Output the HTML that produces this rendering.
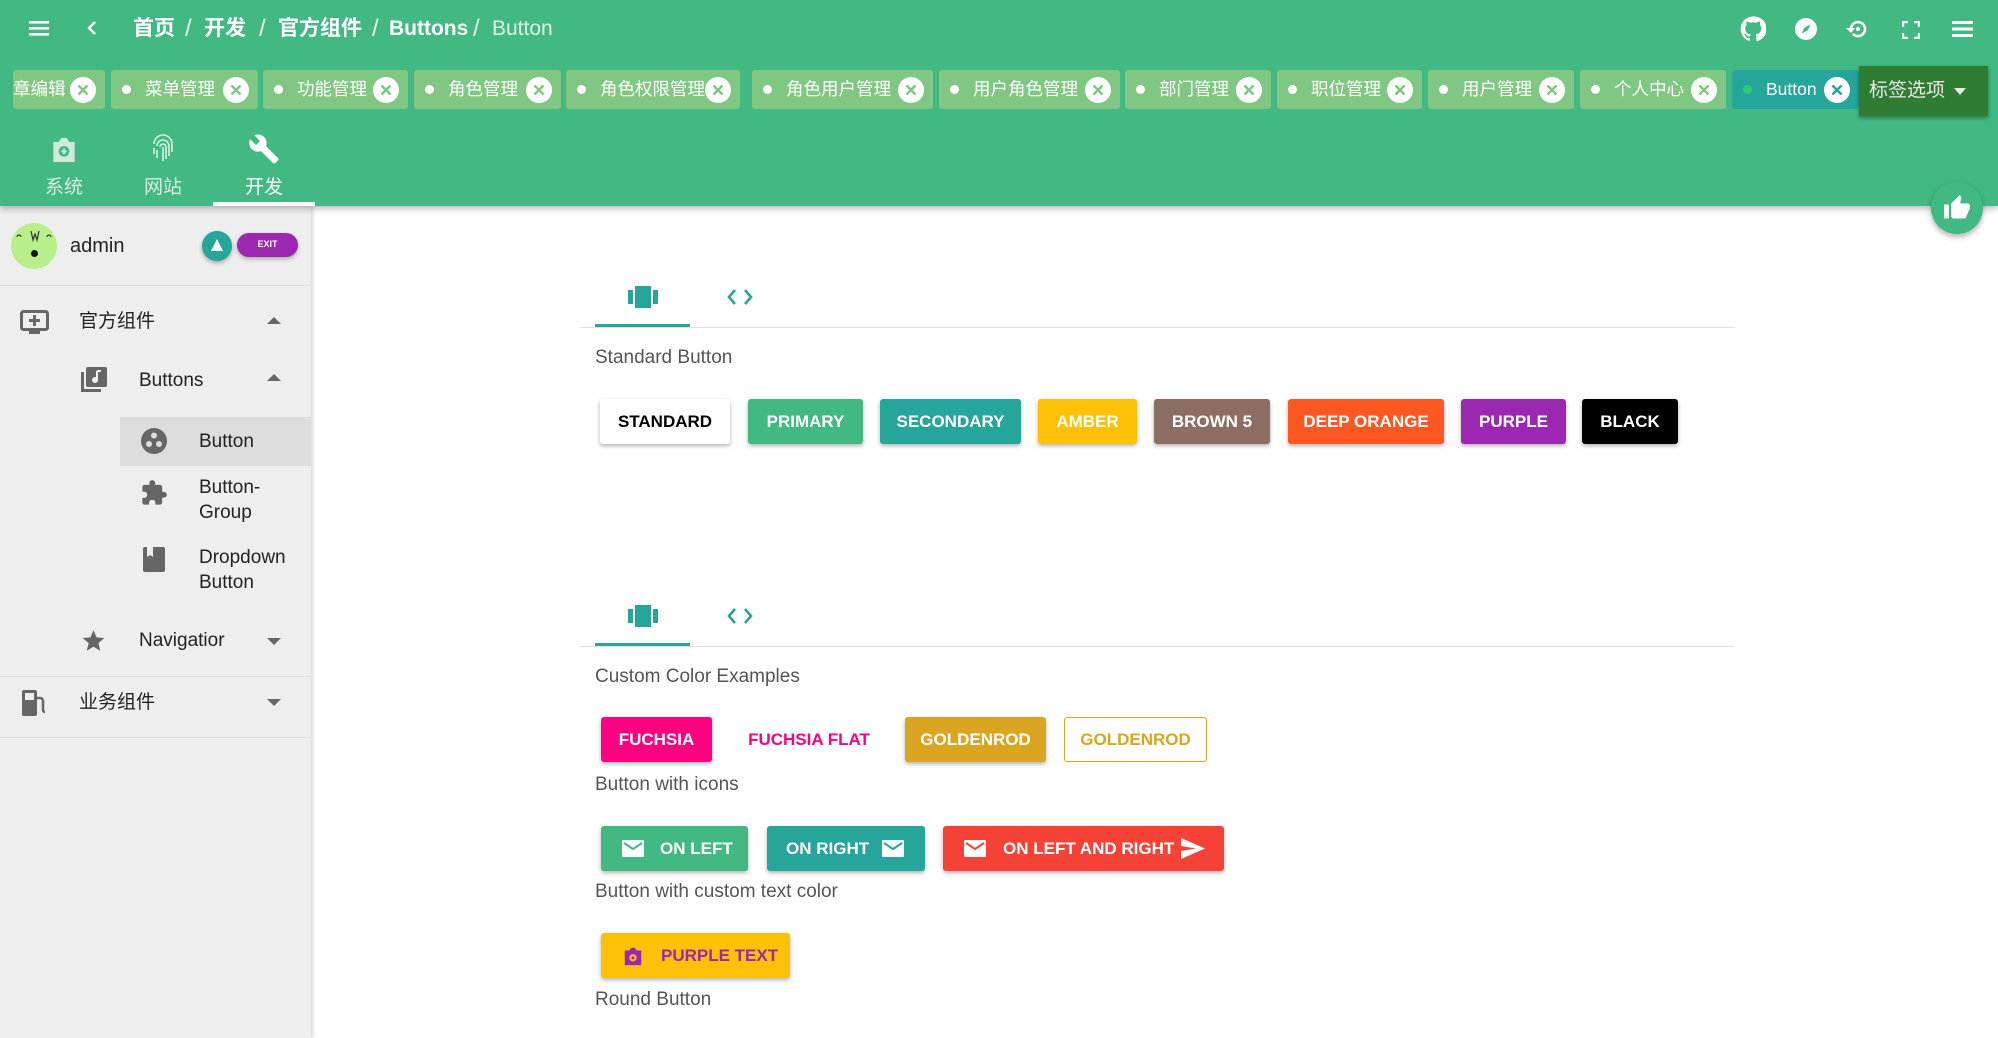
<!DOCTYPE html>
<html><head><meta charset="utf-8"><style>
*{box-sizing:border-box;margin:0;padding:0}
body{width:1998px;height:1038px;overflow:hidden;background:#fff;font-family:"Liberation Sans","Noto Sans CJK SC",sans-serif;position:relative}
.hdr{position:absolute;left:0;top:0;width:1998px;height:206px;background:#42b883;box-shadow:0 3px 6px rgba(0,0,0,.25);z-index:2}
.abs{position:absolute}
.bc{position:absolute;top:14px;height:30px;line-height:30px;font-size:21px;color:#fff;font-weight:bold;white-space:nowrap}
.sl{font-weight:normal;color:#e8f5ee;font-size:24px}
.tag{position:absolute;top:70px;height:39px;background:#81c784;border-radius:3px;overflow:hidden;color:#fff;font-size:17.5px;line-height:39px;white-space:nowrap}
.tag .d{position:absolute;left:11px;top:15px;width:9px;height:9px;border-radius:50%;background:#fff}
.tag .t{position:absolute;left:34px;top:0}
.tag .x{position:absolute;right:9px;top:7px;width:26px;height:26px}
.side{position:absolute;left:0;top:206px;width:311px;height:832px;background:#eee;box-shadow:2px 0 4px rgba(0,0,0,.15);z-index:1}
.mi{position:absolute;font-size:19px;color:#222;line-height:25px}
.hr{position:absolute;left:0;width:311px;height:1px;background:#ddd}
.arr{position:absolute;width:0;height:0;border-left:7px solid transparent;border-right:7px solid transparent}
.up{border-bottom:7px solid #666}.dn{border-top:7px solid #666}
.lbl{position:absolute;left:595px;font-size:19px;color:#555;font-weight:300}
.btn{position:absolute;height:45px;line-height:45px;text-align:center;font-size:17px;font-weight:bold;color:#fff;border-radius:3px;box-shadow:0 2px 4px rgba(0,0,0,.3);white-space:nowrap}
.tabline{position:absolute;left:580px;width:1155px;height:1px;background:#e0e0e0}
.tabul{position:absolute;left:595px;width:95px;height:3px;background:#26a69a}
</style></head><body>
<svg width="0" height="0" style="position:absolute"><defs><symbol id="cx" viewBox="0 0 26 26"><circle cx="13" cy="13" r="13" fill="#fff"/><path d="M8.5 8.5l9 9M17.5 8.5l-9 9" stroke="currentColor" stroke-width="2.6"/></symbol></defs></svg>
<div class="hdr">
 <svg class="abs" style="left:29px;top:20px" width="20" height="16"><rect y="1" width="20" height="2.6" fill="#fff"/><rect y="7" width="20" height="2.6" fill="#fff"/><rect y="13" width="20" height="2.6" fill="#fff"/></svg>
 <svg class="abs" style="left:86px;top:20px" width="12" height="16"><path d="M9 2 L3 8 L9 14" stroke="#fff" stroke-width="2.4" fill="none"/></svg>
 <div class="bc" style="left:133px">首页</div><div class="bc sl" style="left:185px">/</div>
 <div class="bc" style="left:204px">开发</div><div class="bc sl" style="left:259px">/</div>
 <div class="bc" style="left:278px">官方组件</div><div class="bc sl" style="left:372px">/</div>
 <div class="bc" style="left:389px">Buttons</div><div class="bc sl" style="left:473px">/</div>
 <div class="bc" style="left:492px;font-weight:normal;color:#e0f2e8">Button</div>
 <svg class="abs" style="left:1740px;top:16px" width="26" height="26" viewBox="0 0 24 24"><path fill="#fff" d="M12 .5a11.5 11.5 0 0 0-3.6 22.4c.6.1.8-.3.8-.6v-2c-3.2.7-3.900-1.5-3.9-1.5-.5-1.3-1.3-1.7-1.3-1.7-1-.7.1-.7.1-.7 1.2.1 1.8 1.2 1.8 1.2 1 1.8 2.8 1.3 3.5 1 .1-.8.4-1.300.7-1.6-2.6-.3-5.3-1.3-5.3-5.7 0-1.3.5-2.3 1.2-3.1-.1-.3-.5-1.5.1-3.1 0 0 1-.3 3.2 1.2a11 11 0 0 1 5.8 0c2.2-1.5 3.2-1.2 3.2-1.2.6 1.6.2 2.8.1 3.1.7.8 1.2 1.8 1.2 3.1 0 4.4-2.7 5.4-5.3 5.7.4.4.8 1.1.8 2.2v3.3c0 .3.2.7.8.6A11.5 11.5 0 0 0 12 .5z"/></svg>
 <svg class="abs" style="left:1794px;top:17px" width="24" height="24" viewBox="0 0 24 24"><circle cx="12" cy="12" r="11" fill="#fff"/><path d="M16.5 7.5 L13.5 13.5 L7.5 16.5 L10.5 10.5Z" fill="#42b883"/></svg>
 <svg class="abs" style="left:1844px;top:17px" width="26" height="24" viewBox="0 0 26 24"><path d="M7 12a7 7 0 1 1 2 5" stroke="#fff" stroke-width="2.6" fill="none"/><path d="M2 11 L7 16 L11 11Z" fill="#fff"/><circle cx="14" cy="12" r="2" fill="#fff"/></svg>
 <svg class="abs" style="left:1902px;top:21px" width="18" height="18"><path d="M1 6V1h5M12 1h5v5M17 12v5h-5M6 17H1v-5" stroke="#fff" stroke-width="2.4" fill="none"/></svg>
 <svg class="abs" style="left:1952px;top:21px" width="21" height="16"><rect y="0" width="21" height="3" fill="#fff"/><rect y="6.5" width="21" height="3" fill="#fff"/><rect y="13" width="21" height="3" fill="#fff"/></svg>
 <div class="tag" style="left:13px;width:92px;color:#81c784"><span class="t" style="left:0;color:#fff">章编辑</span><svg class="x"><use href="#cx"/></svg></div>
 <div class="tag" style="left:111px;width:147px;color:#81c784"><span class="d"></span><span class="t" style="color:#fff">菜单管理</span><svg class="x"><use href="#cx"/></svg></div>
 <div class="tag" style="left:263px;width:145px;color:#81c784"><span class="d"></span><span class="t" style="color:#fff">功能管理</span><svg class="x"><use href="#cx"/></svg></div>
 <div class="tag" style="left:414px;width:147px;color:#81c784"><span class="d"></span><span class="t" style="color:#fff">角色管理</span><svg class="x"><use href="#cx"/></svg></div>
 <div class="tag" style="left:566px;width:174px;color:#81c784"><span class="d"></span><span class="t" style="color:#fff">角色权限管理</span><svg class="x"><use href="#cx"/></svg></div>
 <div class="tag" style="left:752px;width:181px;color:#81c784"><span class="d"></span><span class="t" style="color:#fff">角色用户管理</span><svg class="x"><use href="#cx"/></svg></div>
 <div class="tag" style="left:939px;width:181px;color:#81c784"><span class="d"></span><span class="t" style="color:#fff">用户角色管理</span><svg class="x"><use href="#cx"/></svg></div>
 <div class="tag" style="left:1125px;width:146px;color:#81c784"><span class="d"></span><span class="t" style="color:#fff">部门管理</span><svg class="x"><use href="#cx"/></svg></div>
 <div class="tag" style="left:1277px;width:145px;color:#81c784"><span class="d"></span><span class="t" style="color:#fff">职位管理</span><svg class="x"><use href="#cx"/></svg></div>
 <div class="tag" style="left:1428px;width:146px;color:#81c784"><span class="d"></span><span class="t" style="color:#fff">用户管理</span><svg class="x"><use href="#cx"/></svg></div>
 <div class="tag" style="left:1580px;width:146px;color:#81c784"><span class="d"></span><span class="t" style="color:#fff">个人中心</span><svg class="x"><use href="#cx"/></svg></div>
 <div class="tag" style="left:1732px;width:127px;background:#26a69a;color:#26a69a"><span class="d" style="background:#2ecc71"></span><span class="t" style="color:#fff">Button</span><svg class="x"><use href="#cx"/></svg></div>
 <div class="abs" style="left:1859px;top:66px;width:129px;height:50px;background:#2e7d32;box-shadow:0 2px 4px rgba(0,0,0,.35);color:#e8e8e8;font-size:19px;line-height:50px;padding-left:10px">标签选项 <svg width="12" height="8" style="margin-left:4px"><path d="M0 0h12L6 7z" fill="#e8e8e8"/></svg></div>
 <svg class="abs" style="left:48px;top:134px" width="32" height="32" viewBox="0 0 24 24"><path d="M4 6h4l2-3h4l2 3h4v15H4z" fill="#cfeadb"/><circle cx="12" cy="13" r="4" fill="#42b883"/><path d="M12 11v4M10 13h4" stroke="#cfeadb" stroke-width="1.5"/></svg>
 <div class="abs" style="left:45px;top:172px;font-size:19px;color:#d7efe2">系统</div>
 <svg class="abs" style="left:150px;top:134px" width="26" height="30" viewBox="0 0 26 30" fill="none" stroke="#d7efe2" stroke-width="1.6"><path d="M4 10a9 9 0 0 1 18 0v8"/><path d="M7 12a6 6 0 0 1 12 0v10"/><path d="M10 13a3 3 0 0 1 6 0v12"/><path d="M13 13v14M4 14v6M7 16v8"/></svg>
 <div class="abs" style="left:144px;top:172px;font-size:19px;color:#d7efe2">网站</div>
 <svg class="abs" style="left:248px;top:133px" width="32" height="32" viewBox="0 0 24 24"><path fill="#fff" d="M22.7 19l-9.1-9.1c.9-2.3.4-5-1.5-6.9-2-2-5-2.4-7.4-1.3L9 6 6 9 1.6 4.7C.4 7.1.9 10.1 2.9 12.1c1.9 1.9 4.6 2.4 6.9 1.5l9.1 9.1c.4.4 1 .4 1.4 0l2.3-2.3c.5-.4.5-1.1.1-1.4z"/></svg>
 <div class="abs" style="left:245px;top:172px;font-size:19px;color:#fff">开发</div>
 <div class="abs" style="left:213px;top:202px;width:102px;height:4px;background:#fff"></div>
</div>
<div class="abs" style="left:1931px;top:182px;width:52px;height:52px;border-radius:50%;background:#42b883;box-shadow:0 3px 6px rgba(0,0,0,.3);z-index:3"><svg style="margin:12px" width="28" height="28" viewBox="0 0 24 24"><path fill="#fff" d="M1 21h4V9H1v12zm22-11c0-1.1-.9-2-2-2h-6.3l1-4.6v-.3c0-.4-.2-.8-.4-1.1L14.2 1 7.6 7.6C7.2 7.9 7 8.4 7 9v10c0 1.1.9 2 2 2h9c.8 0 1.5-.5 1.8-1.2l3-7.1c.1-.2.2-.5.2-.7v-2z"/></svg></div>
<div class="side">
 <div class="abs" style="left:11px;top:17px;width:46px;height:46px;border-radius:50%;background:#b9ef8a"><div class="abs" style="left:20px;top:27px;width:7px;height:7px;border-radius:50%;background:#111"></div><svg class="abs" style="left:4px;top:6px" width="38" height="14"><path d="M2 8a2 2 0 0 1 4 0M32 8a2 2 0 0 1 4 0M16 2l2 9 2-6 2 6 2-9" stroke="#333" stroke-width="1.2" fill="none"/></svg></div>
 <div class="mi" style="left:70px;top:28px;font-size:20px">admin</div>
 <div class="abs" style="left:202px;top:25px;width:30px;height:30px;border-radius:50%;background:#26a69a;box-shadow:0 2px 4px rgba(0,0,0,.3)"><div class="abs" style="left:9px;top:8px;border-left:6px solid transparent;border-right:6px solid transparent;border-bottom:12px solid #fff"></div></div>
 <div class="abs" style="left:237px;top:27px;width:61px;height:24px;border-radius:12px;background:#9c27b0;color:#fff;font-size:9px;font-weight:bold;text-align:center;line-height:22px;box-shadow:0 2px 4px rgba(0,0,0,.3)">EXIT</div>
 <div class="hr" style="top:79px"></div>
 <svg class="abs" style="left:20px;top:104px" width="29" height="25" viewBox="0 0 29 25"><rect x="1.5" y="1.5" width="26" height="18" rx="2" fill="none" stroke="#666" stroke-width="3"/><rect x="9" y="21" width="11" height="3" fill="#666"/><path d="M14.5 5v11M9 10.5h11" stroke="#666" stroke-width="3"/></svg>
 <div class="mi" style="left:79px;top:103px">官方组件</div><div class="arr up" style="left:267px;top:111px"></div>
 <svg class="abs" style="left:81px;top:161px" width="26" height="25" viewBox="0 0 26 25"><rect x="0" y="5" width="3" height="20" fill="#666"/><rect x="0" y="22" width="20" height="3" fill="#666"/><rect x="5" y="0" width="21" height="20" rx="2" fill="#666"/><path d="M16 4v9" stroke="#eee" stroke-width="2"/><circle cx="14" cy="13" r="3" fill="#eee"/><path d="M16 4h4" stroke="#eee" stroke-width="2"/></svg>
 <div class="mi" style="left:139px;top:162px">Buttons</div><div class="arr up" style="left:267px;top:168px"></div>
 <div class="abs" style="left:120px;top:211px;width:191px;height:49px;background:#ddd"></div>
 <svg class="abs" style="left:141px;top:222px" width="26" height="26" viewBox="0 0 26 26"><circle cx="13" cy="13" r="13" fill="#666"/><circle cx="13" cy="7.5" r="3" fill="#ddd"/><circle cx="8" cy="16" r="3" fill="#ddd"/><circle cx="18" cy="16" r="3" fill="#ddd"/></svg>
 <div class="mi" style="left:199px;top:223px">Button</div>
 <svg class="abs" style="left:140px;top:273px" width="28" height="28" viewBox="0 0 24 24"><path fill="#666" d="M20.5 11H19V7c0-1.1-.9-2-2-2h-4V3.5a2.5 2.5 0 0 0-5 0V5H4c-1.1 0-2 .9-2 2v3.8h1.5c1.5 0 2.7 1.2 2.7 2.7S5 16.2 3.5 16.2H2V20c0 1.1.9 2 2 2h3.8v-1.5c0-1.5 1.2-2.7 2.7-2.7s2.7 1.2 2.7 2.7V22H17c1.1 0 2-.9 2-2v-4h1.5a2.5 2.5 0 0 0 0-5z"/></svg>
 <div class="mi" style="left:199px;top:269px">Button-<br>Group</div>
 <svg class="abs" style="left:143px;top:341px" width="22" height="25"><rect width="22" height="25" rx="2" fill="#666"/><path d="M4 0v10l3-2 3 2V0z" fill="#eee"/></svg>
 <div class="mi" style="left:199px;top:339px">Dropdown<br>Button</div>
 <svg class="abs" style="left:80px;top:422px" width="27" height="26" viewBox="0 0 24 24"><path fill="#666" d="M12 17.3l6.2 3.7-1.6-7L22 9.2l-7.2-.6L12 2 9.2 8.6 2 9.2 7.5 14l-1.7 7z"/></svg>
 <div class="mi" style="left:139px;top:422px">Navigatior</div><div class="arr dn" style="left:267px;top:432px"></div>
 <div class="hr" style="top:470px"></div>
 <svg class="abs" style="left:22px;top:484px" width="24" height="26" viewBox="0 0 24 26"><rect x="0" y="0" width="15" height="26" rx="2" fill="#666"/><rect x="3" y="3" width="9" height="7" fill="#eee"/><path d="M15 8h3a3 3 0 0 1 3 3v9a2 2 0 0 0 2 2" stroke="#666" stroke-width="2.5" fill="none"/></svg>
 <div class="mi" style="left:79px;top:484px">业务组件</div><div class="arr dn" style="left:267px;top:493px"></div>
 <div class="hr" style="top:531px"></div>
</div>
<svg class="abs" style="left:628px;top:286px" width="30" height="22"><rect x="0" y="4" width="5" height="14" fill="#26a69a"/><rect x="7" y="0" width="16" height="22" fill="#26a69a"/><rect x="25" y="4" width="5" height="14" fill="#26a69a"/></svg>
<svg class="abs" style="left:726px;top:288px" width="28" height="18"><path d="M9 2L3 9l6 7M19 2l6 7-6 7" stroke="#26a69a" stroke-width="2.6" fill="none"/></svg>
<div class="tabline" style="top:327px"></div><div class="tabul" style="top:324px"></div>
<div class="lbl" style="top:347px">Standard Button</div>
<div class="btn" style="left:600px;top:399px;width:130px;background:#fff;color:#000">STANDARD</div>
<div class="btn" style="left:748px;top:399px;width:115px;background:#42b883">PRIMARY</div>
<div class="btn" style="left:880px;top:399px;width:141px;background:#26a69a">SECONDARY</div>
<div class="btn" style="left:1038px;top:399px;width:99px;background:#ffc107">AMBER</div>
<div class="btn" style="left:1154px;top:399px;width:116px;background:#8d6e63">BROWN 5</div>
<div class="btn" style="left:1288px;top:399px;width:156px;background:#ff5722">DEEP ORANGE</div>
<div class="btn" style="left:1461px;top:399px;width:105px;background:#9c27b0">PURPLE</div>
<div class="btn" style="left:1582px;top:399px;width:96px;background:#000">BLACK</div>
<svg class="abs" style="left:628px;top:605px" width="30" height="22"><rect x="0" y="4" width="5" height="14" fill="#26a69a"/><rect x="7" y="0" width="16" height="22" fill="#26a69a"/><rect x="25" y="4" width="5" height="14" fill="#26a69a"/></svg>
<svg class="abs" style="left:726px;top:607px" width="28" height="18"><path d="M9 2L3 9l6 7M19 2l6 7-6 7" stroke="#26a69a" stroke-width="2.6" fill="none"/></svg>
<div class="tabline" style="top:646px"></div><div class="tabul" style="top:643px"></div>
<div class="lbl" style="top:666px">Custom Color Examples</div>
<div class="btn" style="left:601px;top:717px;width:111px;background:#ff0080">FUCHSIA</div>
<div class="btn" style="left:740px;top:717px;width:138px;background:none;box-shadow:none;color:#ff0080">FUCHSIA FLAT</div>
<div class="btn" style="left:905px;top:717px;width:141px;background:#daa520">GOLDENROD</div>
<div class="btn" style="left:1064px;top:717px;width:143px;background:#fff;color:#daa520;border:1px solid #daa520;box-shadow:none;line-height:43px">GOLDENROD</div>
<div class="lbl" style="top:774px">Button with icons</div>
<div class="btn" style="left:601px;top:826px;width:147px;background:#42b883;text-align:left;padding-left:59px">ON LEFT<svg class="abs" style="left:21px;top:14px" width="22" height="17"><rect width="22" height="17" rx="1" fill="#fff"/><path d="M2 3l9 6 9-6" stroke="#42b883" stroke-width="2" fill="none"/></svg></div>
<div class="btn" style="left:767px;top:826px;width:158px;background:#26a69a;text-align:left;padding-left:19px">ON RIGHT<svg class="abs" style="left:115px;top:14px" width="22" height="17"><rect width="22" height="17" rx="1" fill="#fff"/><path d="M2 3l9 6 9-6" stroke="#26a69a" stroke-width="2" fill="none"/></svg></div>
<div class="btn" style="left:943px;top:826px;width:281px;background:#f44336;text-align:left;padding-left:60px">ON LEFT AND RIGHT<svg class="abs" style="left:21px;top:14px" width="22" height="17"><rect width="22" height="17" rx="1" fill="#fff"/><path d="M2 3l9 6 9-6" stroke="#f44336" stroke-width="2" fill="none"/></svg><svg class="abs" style="left:238px;top:12px" width="24" height="21" viewBox="0 0 24 21"><path d="M0 0l24 10.5L0 21l0-8 15-2.5L0 8z" fill="#fff"/></svg></div>
<div class="lbl" style="top:881px">Button with custom text color</div>
<div class="btn" style="left:601px;top:933px;width:189px;background:#ffc107;color:#9c27b0;text-align:left;padding-left:60px">PURPLE TEXT<svg class="abs" style="left:21px;top:12px" width="22" height="22" viewBox="0 0 24 24"><path d="M3 6h5l2-3h4l2 3h5v16H3z" fill="#9c27b0"/><circle cx="12" cy="14" r="4" fill="#ffc107"/><circle cx="12" cy="14" r="1.6" fill="#9c27b0"/></svg></div>
<div class="lbl" style="top:989px">Round Button</div>
</body></html>
